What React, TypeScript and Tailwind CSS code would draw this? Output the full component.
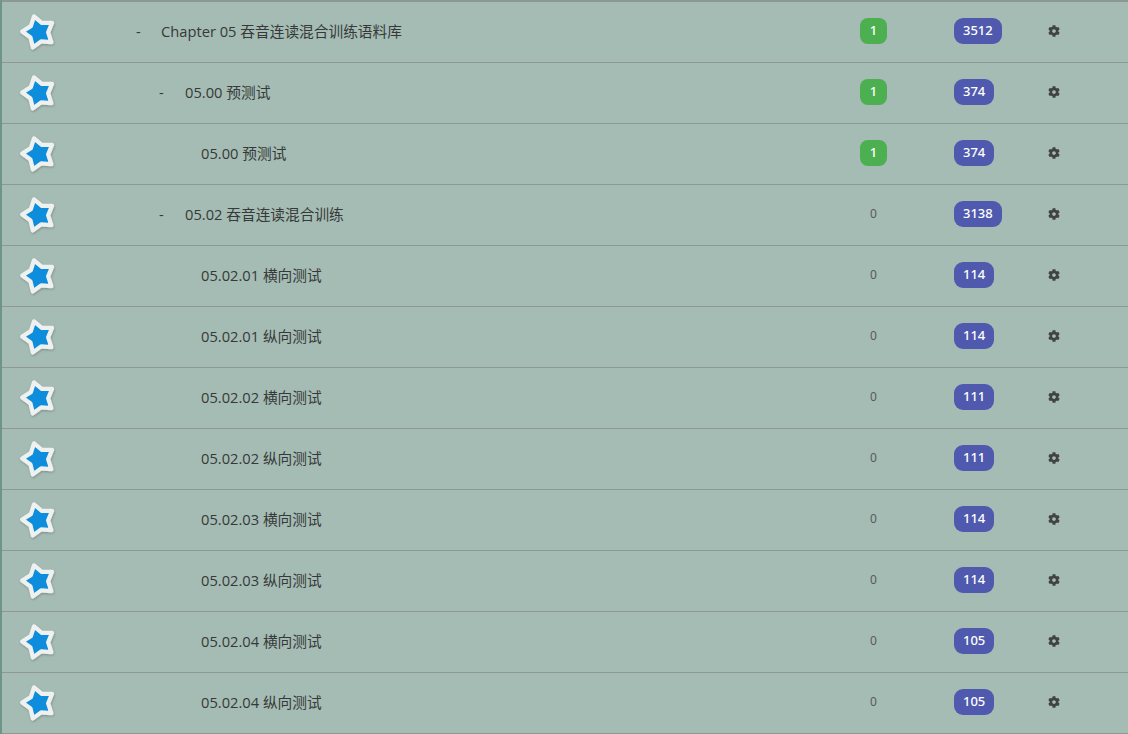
import React from "react";
import { FaCog } from "react-icons/fa";

type Row = { level: 1 | 2 | 3; dash: boolean; name: string; due: number; total: number };

const rows: Row[] = [
  { level: 1, dash: true, name: "Chapter 05 吞音连读混合训练语料库", due: 1, total: 3512 },
  { level: 2, dash: true, name: "05.00 预测试", due: 1, total: 374 },
  { level: 3, dash: false, name: "05.00 预测试", due: 1, total: 374 },
  { level: 2, dash: true, name: "05.02 吞音连读混合训练", due: 0, total: 3138 },
  { level: 3, dash: false, name: "05.02.01 横向测试", due: 0, total: 114 },
  { level: 3, dash: false, name: "05.02.01 纵向测试", due: 0, total: 114 },
  { level: 3, dash: false, name: "05.02.02 横向测试", due: 0, total: 111 },
  { level: 3, dash: false, name: "05.02.02 纵向测试", due: 0, total: 111 },
  { level: 3, dash: false, name: "05.02.03 横向测试", due: 0, total: 114 },
  { level: 3, dash: false, name: "05.02.03 纵向测试", due: 0, total: 114 },
  { level: 3, dash: false, name: "05.02.04 横向测试", due: 0, total: 105 },
  { level: 3, dash: false, name: "05.02.04 纵向测试", due: 0, total: 105 },
];

function starPoints(cx: number, cy: number, ro: number, ri: number, rot: number) {
  const pts: string[] = [];
  for (let i = 0; i < 10; i++) {
    const r = i % 2 === 0 ? ro : ri;
    const a = ((-90 + rot + i * 36) * Math.PI) / 180;
    pts.push(`${(cx + r * Math.cos(a)).toFixed(2)},${(cy + r * Math.sin(a)).toFixed(2)}`);
  }
  return pts.join(" ");
}

function Star() {
  const p = starPoints(20, 20.5, 14.5, 8.6, -16);
  return (
    <svg width="45" height="45" viewBox="0 0 40 40">
      <defs>
        <filter id="sh" x="-20%" y="-20%" width="140%" height="140%">
          <feDropShadow dx="0.5" dy="1" stdDeviation="0.8" floodColor="#000" floodOpacity="0.25" />
        </filter>
      </defs>
      <polygon points={p} fill="#0b8ddc" stroke="#eef1f0" strokeWidth="3.8" strokeLinejoin="round" filter="url(#sh)" />
    </svg>
  );
}

export default function App() {
  return (
    <div
      className="w-[1128px] h-[734px] overflow-hidden bg-[#a5bcb4] border-l-2 border-[#6f9586]"
      style={{ fontFamily: "'Open Sans', 'Noto Sans CJK SC', sans-serif" }}
    >
      <div className="border-t-2 border-[#8d9894]">
        {rows.map((r, i) => (
          <div key={i} className="flex items-center h-[61px] border-b border-[#8d9894] pb-[2px]">
            <div className="w-[72px] flex justify-center items-center">
              <Star />
            </div>
            <div
              className={
                "flex-1 flex items-center text-[14.7px] text-[#363938] " +
                (r.level === 1 ? "pl-[62px]" : r.level === 2 ? "pl-[85px]" : "pl-[127px]")
              }
            >
              {r.dash && <span className={r.level === 1 ? "w-[25px]" : "w-[26px]"}>-</span>}
              <span>{r.name}</span>
            </div>
            <div className="w-[67px] flex justify-center" style={{ fontFamily: "'Noto Sans', sans-serif" }}>
              {r.due > 0 ? (
                <span className="h-[26px] min-w-[27px] px-2 rounded-[8px] bg-[#4caf50] text-white text-[13px] font-medium flex items-center justify-center">
                  {r.due}
                </span>
              ) : (
                <span className="text-[12px] text-[#555b59]">0</span>
              )}
            </div>
            <div className="w-[123px] pl-[47px] flex" style={{ fontFamily: "'Noto Sans', sans-serif" }}>
              <span className="h-[26px] px-[9px] rounded-[9px] bg-[#4f5aae] text-white text-[13px] font-medium flex items-center justify-center">
                {r.total}
              </span>
            </div>
            <div className="w-[48px] flex justify-center items-center text-[#404342]">
              <FaCog size={12} />
            </div>
            <div className="w-[50px]" />
          </div>
        ))}
      </div>
    </div>
  );
}
